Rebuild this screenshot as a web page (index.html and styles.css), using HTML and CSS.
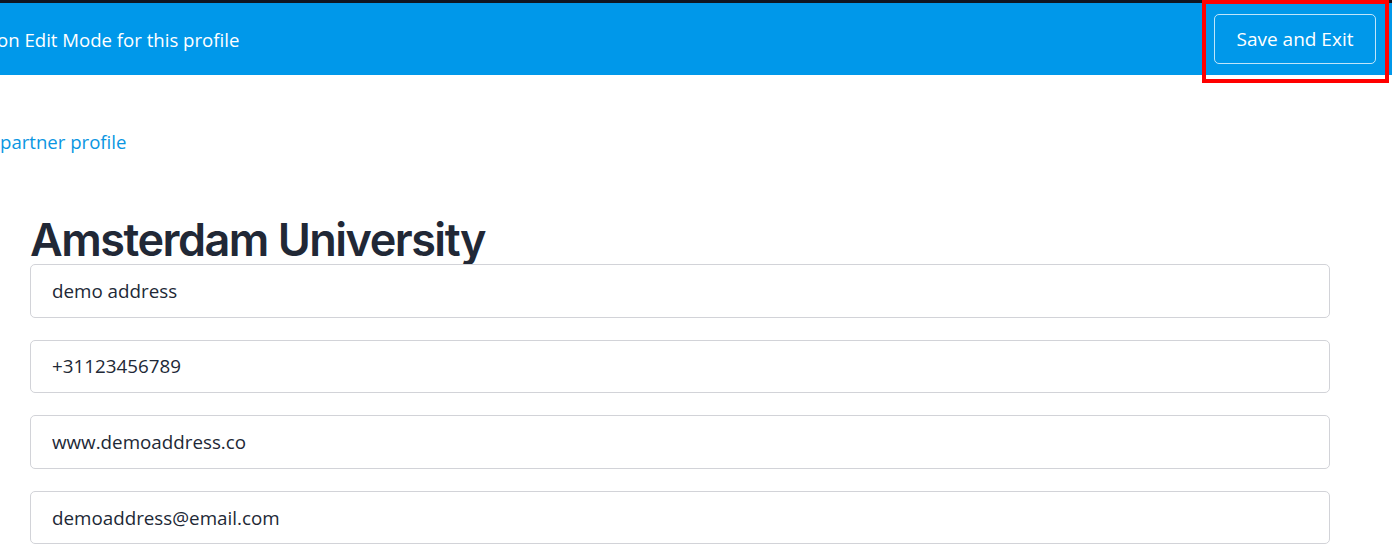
FILE: index.html
```html
<!DOCTYPE html>
<html>
<head>
<meta charset="utf-8">
<link rel="stylesheet" href="styles.css">
</head>
<body>
<div class="topline"></div>
<header class="banner">
  <span class="banner-text">on Edit Mode for this profile</span>
  <button class="save-btn">Save and Exit</button>
  <div class="highlight"></div>
</header>
<main class="content">
  <a class="back-link" href="#">partner profile</a>
  <h1 class="title">Amsterdam University</h1>
  <form class="fields">
    <input class="field" type="text" value="demo address" readonly>
    <input class="field" type="text" value="+31123456789" readonly>
    <input class="field" type="text" value="www.demoaddress.co" readonly>
    <input class="field" type="text" value="demoaddress@email.com" readonly>
  </form>
</main>
</body>
</html>
```
FILE: styles.css
```css
* { box-sizing: border-box; }
html, body { margin: 0; padding: 0; background: #fff; }
body { font-family: "Open Sans", "Noto Sans", sans-serif; overflow: hidden; }

.topline { height: 3px; background: #0f1622; }

.banner {
  position: relative;
  height: 72px;
  background: #0098ea;
  display: flex;
  align-items: center;
  justify-content: space-between;
  padding: 0 16px 0 0;
}
.banner-text {
  color: #fff;
  font-size: 18.6px;
  margin-left: -3px;
}
.save-btn {
  font-family: inherit;
  width: 162px;
  height: 50px;
  background: transparent;
  color: #fff;
  font-size: 19px;
  border: 1px solid rgba(255,255,255,0.75);
  border-radius: 5px;
  cursor: pointer;
}
.highlight {
  position: absolute;
  left: 1202px;
  top: -3px;
  width: 187px;
  height: 83px;
  border: 4px solid #f00;
  pointer-events: none;
}

.content { padding: 0 62px 0 30px; }
.back-link {
  display: block;
  margin: 54px 0 0 -30px;
  color: #0a96e2;
  font-size: 18.6px;
  text-decoration: none;
  line-height: 26px;
}
.title {
  margin: 61px 0 0;
  font-family: Inter, sans-serif;
  font-weight: 600;
  font-size: 45px;
  line-height: 48px;
  color: #212836;
  letter-spacing: -1.5px;
}
.fields {
  display: flex;
  flex-direction: column;
  gap: 22px;
}
.field {
  display: block;
  width: 100%;
  height: 53.6px;
  border: 1px solid #d2d3d8;
  border-radius: 5px;
  padding: 0 21px;
  font-family: "Open Sans", sans-serif;
  font-size: 18.8px;
  color: #212836;
  background: #fff;
  outline: none;
}
```
